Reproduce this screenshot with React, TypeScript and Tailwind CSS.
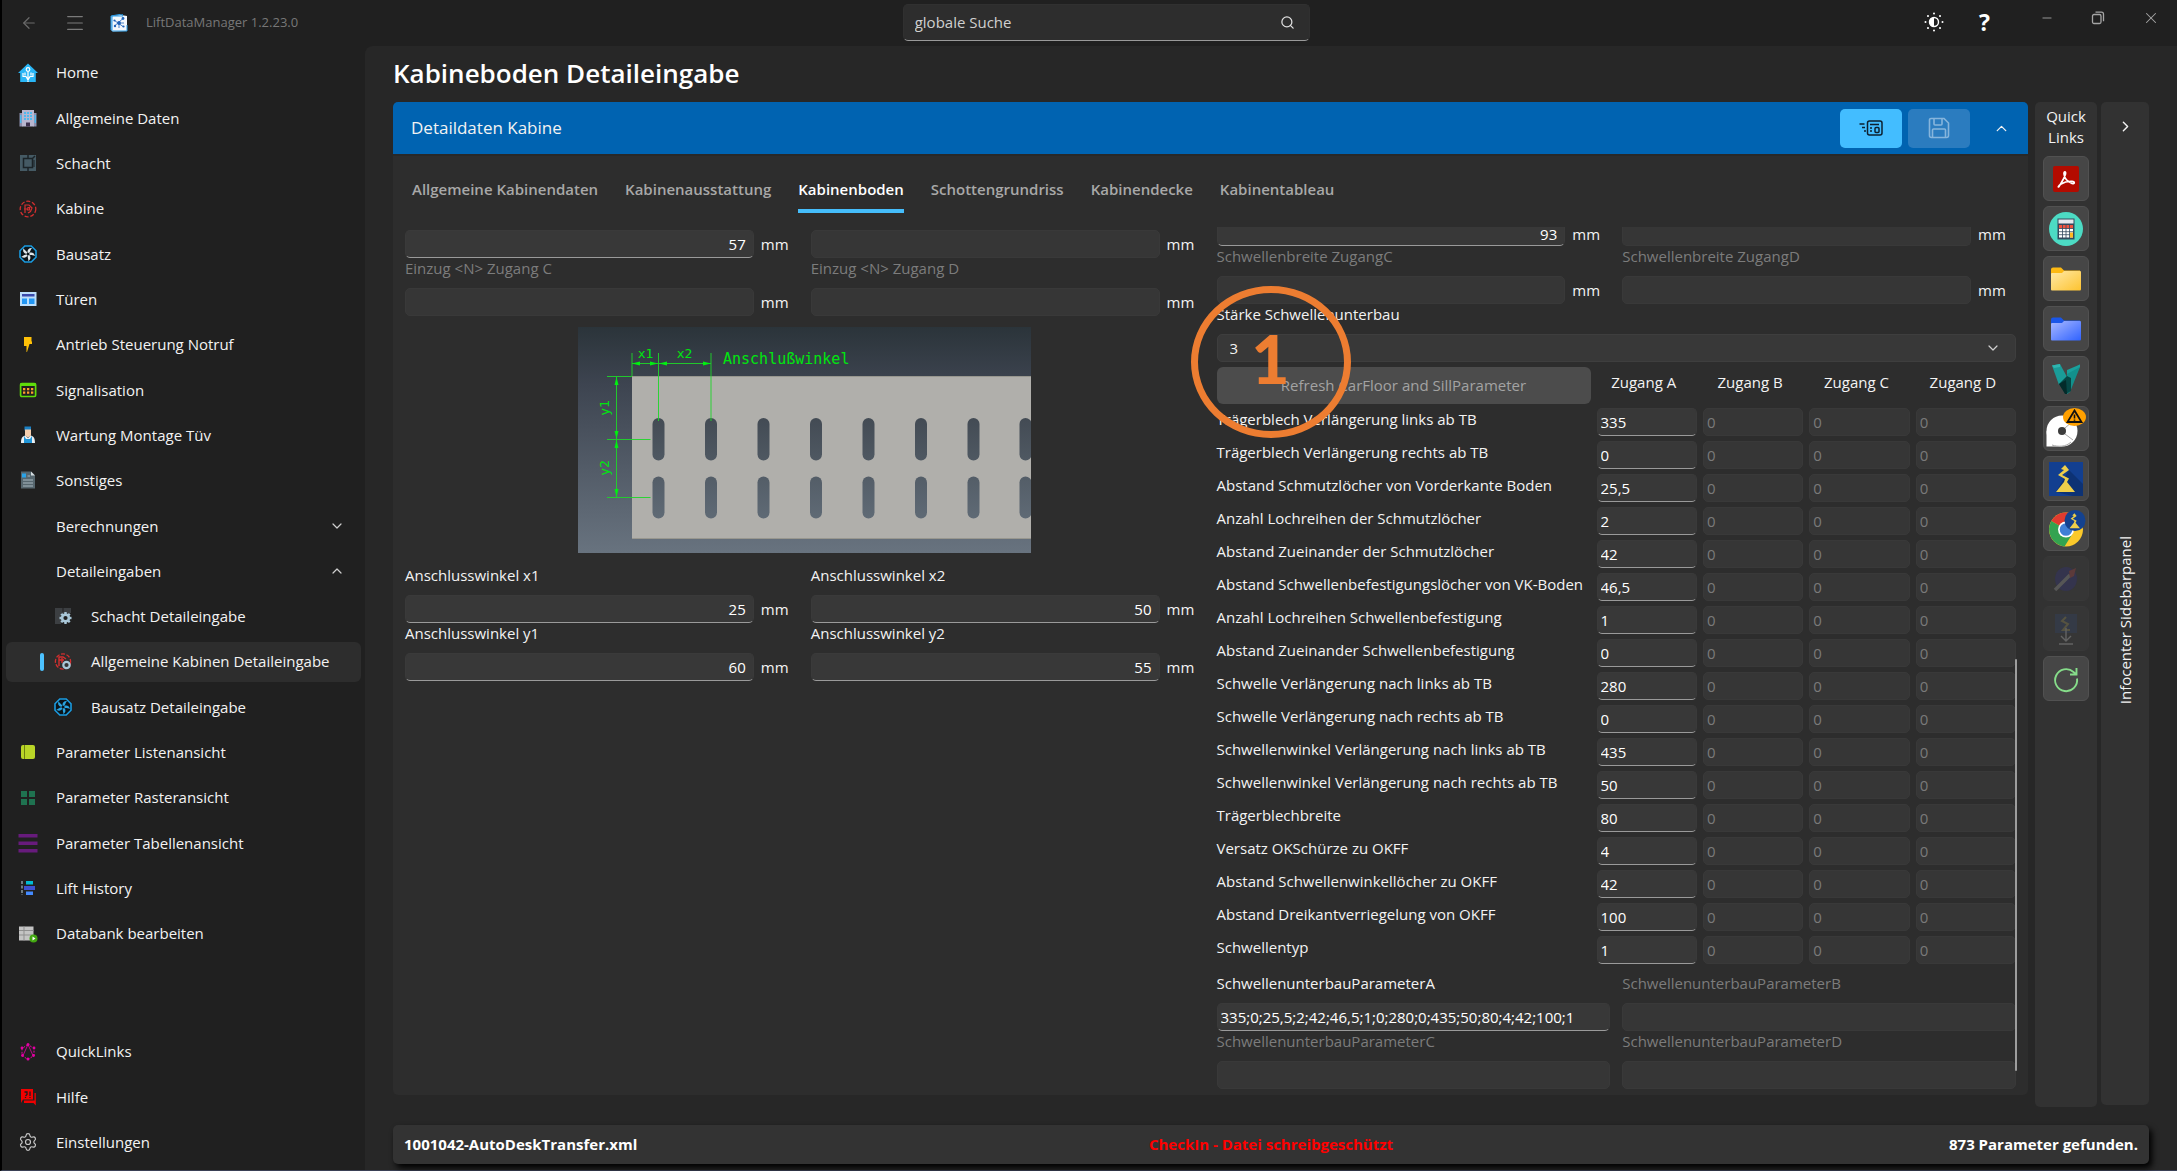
import React from "react";
import { ArrowLeft, Menu, Search, ChevronDown, ChevronUp, ChevronRight, Minus, X, Settings } from "lucide-react";

function Icon({ children }: { children: React.ReactNode }) {
  return (
    <svg viewBox="0 0 20 20" className="size-5 shrink-0" fill="none" aria-hidden="true">
      {children}
    </svg>
  );
}

const gearTeeth = [0, 45, 90, 135, 180, 225, 270, 315];

function SmallGear({ cx, cy }: { cx: number; cy: number }) {
  return (
    <g>
      {gearTeeth.map((a) => (
        <rect key={a} x={cx - 1.2} y={cy - 6} width="2.4" height="3" fill="#a9c7d8" transform={`rotate(${a} ${cx} ${cy})`} />
      ))}
      <circle cx={cx} cy={cy} r="3.4" stroke="#a9c7d8" strokeWidth="2.6" />
    </g>
  );
}

function Turbine({ blade }: { blade: string }) {
  return (
    <g>
      <path d="M6.8 2h6.4L18 6.8v6.4L13.2 18H6.8L2 13.2V6.8z" fill="#0b1419" stroke="#1a9be0" strokeWidth="1.6" />
      {[0, 72, 144, 216, 288].map((a) => (
        <path key={a} d="M9.5 8.400c-.3-2.600 1.500-4.600 4.500-4.400-1.200 1-1.300 3-2.800 4.900z" fill={blade} transform={`rotate(${a} 10 10)`} />
      ))}
    </g>
  );
}

const ico = {
  home: (
    <Icon>
      <path d="M10 .5 20 10h-2.200v9H2.200v-9H0z" fill="#29b6f6" />
      <circle cx="10" cy="6.500" r="1.800" stroke="#fff" strokeWidth="1.200" />
      <path d="M10 8.500V19M5 10v3.500h3L10 17l2-3.500h3V10M7 9.500v3M13 9.500v3" stroke="#fff" strokeWidth="1.200" />
    </Icon>
  ),
  building: (
    <Icon>
      <path d="M1.500 5h3v13.500h-3zM15.500 5h3v13.500h-3z" fill="#8d8fae" />
      <path d="M4 2h12v16.500H4z" fill="#b8b6cf" />
      <path d="M6 4h2v2H6zM9 4h2v2H9zM12 4h2v2h-2zM6 7h2v2H6zM9 7h2v2H9zM12 7h2v2h-2zM6 10h2v2H6zM9 10h2v2H9zM12 10h2v2h-2zM2 7h1.500v8H2zM16.500 7H18v8h-1.500z" fill="#4fb9ee" />
      <path d="M8 14.500h4v4H8z" fill="#3c2f4c" />
    </Icon>
  ),
  shaft: (
    <Icon>
      <path d="M2 2h16v16H2z" fill="#455a64" />
      <path d="M5.500 5.500h9v9h-9zM10 2v3.500M10 14.500V18M14 6l3-3" stroke="#1b2327" strokeWidth="1.500" />
      <path d="M16 7v7" stroke="#1b2327" strokeWidth="1" />
    </Icon>
  ),
  cabin: (
    <Icon>
      <circle cx="10" cy="10" r="7.800" stroke="#d32f2f" strokeWidth="1.300" strokeDasharray="4 1.800" />
      <path d="M7 14V6h4l3 3-1.500 3.500L10 14M6 10h3M10 8.500h1.500V11H9.500z" stroke="#d32f2f" strokeWidth="1.200" />
    </Icon>
  ),
  kit: (
    <Icon>
      <Turbine blade="#dfe6ea" />
    </Icon>
  ),
  doors: (
    <Icon>
      <path d="M2 3h16.500v14H2z" fill="#bbdefb" />
      <path d="M4 5h12.500v2.500H4z" fill="#3949ab" />
      <path d="M4 9.500h5V15H4zM11 9.500h5.500V15H11z" fill="#2196f3" />
    </Icon>
  ),
  bolt: (
    <Icon>
      <path d="M6 2h7.500v4.500H14V9h-2.500L9 17h-.5v-6H6z" fill="#ffc107" />
    </Icon>
  ),
  signal: (
    <Icon>
      <rect x="2.600" y="3.500" width="15" height="13" rx="1.200" stroke="#5fdc0a" strokeWidth="1.700" />
      <path d="M2.500 3h15v3h-15z" fill="#5fdc0a" />
      <path d="M5 8h2.300v2.300H5zM9 8h2.300v2.300H9zM13 8h2.300v2.300H13zM5 11.500h2.300v2.300H5zM9 11.500h2.300v2.300H9zM13 11.500h2.300v2.300H13z" fill="#ff9d2e" />
    </Icon>
  ),
  worker: (
    <Icon>
      <path d="M6.500 1.500h6.500v4H6.500z" fill="#1a80c4" />
      <path d="M7 4.500h6v6l-3 2-3-2z" fill="#f6cfae" />
      <path d="M3 18c0-5 1.500-7 4.500-7.500L10 13l2.500-2.500C15.500 11 17 13 17 18z" fill="#e9eef2" />
      <path d="M6 11v7h8v-7l-2 3H8z" fill="#2196d8" />
    </Icon>
  ),
  doc: (
    <Icon>
      <path d="M3 1.500h10l4 4v13H3z" fill="#56666e" />
      <path d="M13 1.500v4h4z" fill="#d5dde0" />
      <path d="M4 3.500h4v4H4z" fill="#29a3e8" />
      <path d="M9.500 6H12M5 10h10M5 13h10M5 16h10" stroke="#a8b8c0" strokeWidth="1.100" />
    </Icon>
  ),
  shaftGear: (
    <Icon>
      <path d="M2 2h16v5H8v11H2z" fill="#3c3f42" />
      <path d="M10 2v4" stroke="#202020" />
      <SmallGear cx={12.5} cy={12} />
    </Icon>
  ),
  cabinGear: (
    <Icon>
      <circle cx="10" cy="9.500" r="7.600" stroke="#d32f2f" strokeWidth="1.300" strokeDasharray="4 1.600" />
      <path d="M6 14V5h4l3 2M6 8h5M9 6v5" stroke="#d32f2f" strokeWidth="1.400" />
      <circle cx="13.500" cy="13" r="3.200" fill="#333" stroke="#a9c7d8" strokeWidth="2.200" />
    </Icon>
  ),
  kitGear: (
    <Icon>
      <Turbine blade="#29a3e0" />
    </Icon>
  ),
  list: (
    <Icon>
      <rect x="3" y="3" width="14" height="14" rx="2" fill="#b9d527" />
      <path d="M6.500 3v14" stroke="#6d8010" strokeWidth="1" />
    </Icon>
  ),
  raster: (
    <Icon>
      <path d="M3 3h6v6H3zM11 3h6v6h-6zM3 11h6v6H3zM11 11h6v6h-6z" fill="#1f7250" />
    </Icon>
  ),
  table: (
    <Icon>
      <path d="M.5 1h19v3.500H.5zM.5 8.500h19V12H.5zM.5 16h19v3.500H.5z" fill="#671b7c" />
    </Icon>
  ),
  history: (
    <Icon>
      <path d="M4 3v14" stroke="#8fa3ad" strokeWidth="1.400" strokeDasharray="3 1.500" />
      <path d="M8 3h7v3.500H8z" fill="#00bcd4" />
      <path d="M6 8h11v4H6z" fill="#3f51d0" />
      <path d="M8 13.500h7V17H8z" fill="#448aff" />
    </Icon>
  ),
  database: (
    <Icon>
      <path d="M1 2.500h14.500v14H1z" fill="#c4c4c4" />
      <path d="M1 6.500h14.500M1 11h14.500M6 2.500v14" stroke="#8f8f8f" />
      <circle cx="15.500" cy="14.500" r="4" fill="#43a811" />
      <path d="M14.500 12.500v4l3-2z" fill="#fff" />
    </Icon>
  ),
  links: (
    <Icon>
      <path d="M10 2.500 4 6.500v7l6 4 6-4v-7z" stroke="#e500a4" strokeWidth="1" strokeDasharray="2 1.500" />
      <path d="M10 2.500 5 13.500M10 2.500l5 11" stroke="#e500a4" strokeWidth=".8" />
      <g fill="#e500a4">
        <circle cx="10" cy="2.500" r="1.500" />
        <circle cx="4" cy="6" r="1.400" />
        <circle cx="16" cy="6" r="1.400" />
        <circle cx="4.500" cy="13.500" r="1.400" />
        <circle cx="15.500" cy="13.500" r="1.400" />
        <circle cx="10" cy="17" r="1.500" />
      </g>
    </Icon>
  ),
  help: (
    <Icon>
      <path d="M3 2h12v10.500H5L3 16z" fill="#f00000" />
      <path d="M17.800 6v12.500L15.500 16H6v-2.500h10.500V6z" fill="#f00000" />
      <path d="M6.500 5h2.500v2.500L7.500 9M7.500 10v1M12 4.500V9M12 10v1" stroke="#1c1c1c" strokeWidth="1.300" />
    </Icon>
  ),
  settings: <Settings className="size-5 shrink-0 text-[#c8c8c8]" strokeWidth={1.4} aria-hidden="true" />,
};

type NavEntry = { label: string; icon?: React.ReactNode; sub?: boolean; active?: boolean; chevron?: "up" | "down" };

const mainNav: NavEntry[] = [
  { label: "Home", icon: ico.home },
  { label: "Allgemeine Daten", icon: ico.building },
  { label: "Schacht", icon: ico.shaft },
  { label: "Kabine", icon: ico.cabin },
  { label: "Bausatz", icon: ico.kit },
  { label: "Türen", icon: ico.doors },
  { label: "Antrieb Steuerung Notruf", icon: ico.bolt },
  { label: "Signalisation", icon: ico.signal },
  { label: "Wartung Montage Tüv", icon: ico.worker },
  { label: "Sonstiges", icon: ico.doc },
  { label: "Berechnungen", chevron: "down" },
  { label: "Detaileingaben", chevron: "up" },
  { label: "Schacht Detaileingabe", icon: ico.shaftGear, sub: true },
  { label: "Allgemeine Kabinen Detaileingabe", icon: ico.cabinGear, sub: true, active: true },
  { label: "Bausatz Detaileingabe", icon: ico.kitGear, sub: true },
  { label: "Parameter Listenansicht", icon: ico.list },
  { label: "Parameter Rasteransicht", icon: ico.raster },
  { label: "Parameter Tabellenansicht", icon: ico.table },
  { label: "Lift History", icon: ico.history },
  { label: "Databank bearbeiten", icon: ico.database },
];

const footerNav: NavEntry[] = [
  { label: "QuickLinks", icon: ico.links },
  { label: "Hilfe", icon: ico.help },
  { label: "Einstellungen", icon: ico.settings },
];

function NavItem({ item }: { item: NavEntry }) {
  return (
    <li className="flex min-h-0 flex-1 items-center">
      <a
        href="#"
        aria-current={item.active ? "page" : undefined}
        className={`flex h-10 w-full items-center rounded-md pr-4 ${item.active ? "bg-[#2d2d2d]" : ""} ${item.sub ? "pl-[34px]" : "pl-3"}`}
      >
        {item.sub && <span className={`h-[18px] w-1 rounded-full ${item.active ? "bg-[#4cc2ff]" : ""}`} />}
        <span className={`flex w-5 shrink-0 ${item.sub ? "ml-[9px]" : ""}`}>{item.icon}</span>
        <span className="ml-[18px] flex-1 whitespace-nowrap">{item.label}</span>
        {item.chevron === "down" && <ChevronDown className="size-4 text-[#cfcfcf]" strokeWidth={1.8} />}
        {item.chevron === "up" && <ChevronUp className="size-4 text-[#cfcfcf]" strokeWidth={1.8} />}
      </a>
    </li>
  );
}

type FieldProps = { id: string; value?: string; disabled?: boolean; right?: boolean; label?: string; flush?: boolean };

function Field({ id, value = "", disabled, right, label, flush }: FieldProps) {
  return (
    <input
      id={id}
      aria-label={label}
      defaultValue={value}
      disabled={disabled}
      className={`w-full min-w-0 border px-[7px] ${flush ? "h-[19px] rounded-b-[5px] border-t-0 pb-1 leading-none" : "h-7 rounded-[5px]"} ${
        right ? "text-right" : "pl-[3px]"
      } ${
        disabled
          ? "border-[#393939] bg-[#363636] text-[#7a7a7a]"
          : "border-[#3a3a3a] border-b-[#9a9a9a] bg-[#383838] text-white"
      }`}
    />
  );
}

function MmField(props: FieldProps) {
  return (
    <div className="flex items-center gap-[7px]">
      <Field {...props} right />
      <span className={`w-[38px] shrink-0 ${props.flush ? "pb-1 leading-[15px]" : ""}`}>mm</span>
    </div>
  );
}

function FieldLabel({ id, dim, children }: { id: string; dim?: boolean; children: React.ReactNode }) {
  return (
    <label htmlFor={id} className={`block h-[30px] leading-[21px] ${dim ? "text-[#7c7c7c]" : ""}`}>
      {children}
    </label>
  );
}

const slotX = [80.5, 133, 185.5, 238, 290.5, 343, 395.5, 447.5];

function BracketDrawing() {
  return (
    <svg viewBox="0 0 453 226" className="mx-auto mt-[11px] h-[226px] w-[453px]" role="img" aria-label="Anschlußwinkel">
      <defs>
        <linearGradient id="sky" x1="0" y1="0" x2="0" y2="1">
          <stop offset="0" stopColor="#2b343a" />
          <stop offset=".25" stopColor="#3d4450" />
          <stop offset="1" stopColor="#68737f" />
        </linearGradient>
        <linearGradient id="slot" gradientUnits="userSpaceOnUse" x1="0" y1="91" x2="0" y2="191">
          <stop offset="0" stopColor="#434b54" />
          <stop offset="1" stopColor="#5f6a75" />
        </linearGradient>
      </defs>
      <rect width="453" height="226" fill="url(#sky)" />
      <rect x="54" y="49" width="399" height="163" fill="#b0afab" />
      <path d="M54 211.500h399M54 49.500h399" stroke="#98978f" />
      {slotX.map((x) => (
        <g key={x} fill="url(#slot)">
          <rect x={x - 6} y="91" width="12" height="42.500" rx="6" />
          <rect x={x - 6} y="149.500" width="12" height="42" rx="6" />
        </g>
      ))}
      <path
        d="M54 26v23M80.500 26v68M133 26v68M54 36.500h79M38.500 49.500v121M29 49.500h25M29 112.500h43.500M29 170.500h43.500"
        stroke="#1fd62a"
        strokeWidth="1"
        opacity=".9"
      />
      <g fill="#00f010">
        <path d="M54 36.500l8-2v4zM80 36.500l-8-2v4zM81 36.500l8-2v4zM133 36.500l-8-2v4z" />
        <path d="M38.500 50l-2 8h4zM38.500 112l-2-8h4zM38.500 113l-2 8h4zM38.500 170l-2-8h4z" />
      </g>
      <g fill="#00e60f" fontFamily="'DejaVu Sans Mono', monospace" fontSize="13">
        <text x="67.500" y="31" textAnchor="middle">x1</text>
        <text x="106.500" y="31" textAnchor="middle">x2</text>
        <text x="145" y="37" fontSize="15">Anschlußwinkel</text>
        <text transform="translate(31 81) rotate(-90)" textAnchor="middle">y1</text>
        <text transform="translate(31 141) rotate(-90)" textAnchor="middle">y2</text>
      </g>
    </svg>
  );
}

const sillRows: [string, string][] = [
  ["Trägerblech Verlängerung links ab TB", "335"],
  ["Trägerblech Verlängerung rechts ab TB", "0"],
  ["Abstand Schmutzlöcher von Vorderkante Boden", "25,5"],
  ["Anzahl Lochreihen der Schmutzlöcher", "2"],
  ["Abstand Zueinander der Schmutzlöcher", "42"],
  ["Abstand Schwellenbefestigungslöcher von VK-Boden", "46,5"],
  ["Anzahl Lochreihen Schwellenbefestigung", "1"],
  ["Abstand Zueinander Schwellenbefestigung", "0"],
  ["Schwelle Verlängerung nach links ab TB", "280"],
  ["Schwelle Verlängerung nach rechts ab TB", "0"],
  ["Schwellenwinkel Verlängerung nach links ab TB", "435"],
  ["Schwellenwinkel Verlängerung nach rechts ab TB", "50"],
  ["Trägerblechbreite", "80"],
  ["Versatz OKSchürze zu OKFF", "4"],
  ["Abstand Schwellenwinkellöcher zu OKFF", "42"],
  ["Abstand Dreikantverriegelung von OKFF", "100"],
  ["Schwellentyp", "1"],
];

const entrances = ["A", "B", "C", "D"];

function SillTable() {
  return (
    <table className="mt-[5px] w-full table-fixed border-collapse">
      <thead>
        <tr>
          <th className="w-[374px] p-0 pb-1">
            <button disabled className="block h-[37px] w-full rounded-md bg-[#4c4c4c] font-normal text-[#a3a3a3]">
              Refresh CarFloor and SillParameter
            </button>
          </th>
          {entrances.map((e) => (
            <th key={e} scope="col" className="p-0 pb-2.5 text-center font-normal">
              Zugang {e}
            </th>
          ))}
        </tr>
      </thead>
      <tbody>
        {sillRows.map(([name, value]) => (
          <tr key={name}>
            <th scope="row" className="p-0 text-left align-top leading-[23px] font-normal whitespace-nowrap">
              {name}
            </th>
            {entrances.map((e) => (
              <td key={e} className="p-0 pb-[5px] pl-1.5">
                <div className="flex">
                  <Field id={`${name}-${e}`} label={`${name}, Zugang ${e}`} value={e === "A" ? value : "0"} disabled={e !== "A"} />
                </div>
              </td>
            ))}
          </tr>
        ))}
      </tbody>
    </table>
  );
}

const boltPath = "M19 6l4 5-7 5 7 3.500-2 3.500 8 10H10l8-10 1-3-7-4 6-5-3-1z";

function QuickIcon({ children }: { children: React.ReactNode }) {
  return (
    <svg viewBox="0 0 40 40" className="size-10 overflow-visible" fill="none" aria-hidden="true">
      {children}
    </svg>
  );
}

function Folder({ id, tab, from, to }: { id: string; tab: string; from: string; to: string }) {
  return (
    <QuickIcon>
      <defs>
        <linearGradient id={id} x1="0" y1="0" x2="1" y2="1">
          <stop offset="0" stopColor={from} />
          <stop offset="1" stopColor={to} />
        </linearGradient>
      </defs>
      <path d="M5 10.500q0-2 2-2h8l3 3h16v6H5z" fill={tab} />
      <path d="M6 14h10l2-2h16q1 0 1 1v17q0 1.500-1 1.500H6q-1 0-1-1V15q0-1 1-1z" fill={`url(#${id})`} />
    </QuickIcon>
  );
}

const quickLinks: { label: string; icon: React.ReactNode; disabled?: boolean }[] = [
  {
    label: "PDF",
    icon: (
      <QuickIcon>
        <rect x="7" y="7" width="26" height="26" rx="2" fill="#b30b00" />
        <path
          d="M13 27.500c2-3.500 5-7 6.500-12.500.6-3-1.800-3-1.500 0 .5 4.500 4 8 8 9.500 3 .5 3-2 0-2.200-4-.2-8 .8-11 2.700-3 2-3.200 4-2 2.500z"
          stroke="#fff"
          strokeWidth="1.700"
        />
      </QuickIcon>
    ),
  },
  {
    label: "Rechner",
    icon: (
      <QuickIcon>
        <circle cx="20" cy="20" r="17" fill="#4cdbc4" />
        <path d="M11.500 9.500h17v21h-17z" fill="#324a5e" />
        <path d="M12.500 10.500h15v4h-15z" fill="#e6e9ee" />
        <path d="M13 16.500h14v12H13z" fill="#fff" />
        <path d="M13 16h14v3.500H13z" fill="#f1543f" />
        <path d="M24 23.500h3v5h-3z" fill="#ffb820" />
        <path d="M16.500 16v13M20 16v13M23.500 16v13M13 19.500h14M13 22.700h14M13 25.700h11" stroke="#324a5e" strokeWidth=".8" />
      </QuickIcon>
    ),
  },
  { label: "Ordner", icon: <Folder id="fy" tab="#fdb913" from="#ffe9a8" to="#fdc32f" /> },
  { label: "Projektordner", icon: <Folder id="fb" tab="#1a56e8" from="#a8b8ff" to="#2f62ff" /> },
  {
    label: "Vault",
    icon: (
      <QuickIcon>
        <path d="M6 6.500 14 5l7 13-8 8z" fill="#1a9c98" />
        <path d="M6 6.500 14 5v3L8 9z" fill="#2fb5b0" />
        <path d="M34 5.500 21 13v22l3-2L34 8z" fill="#12908c" />
        <path d="M34 5.500 21 11v4l13-7z" fill="#1aa09c" />
        <path d="M13 25l8-8 4 2v13l-5 3z" fill="#064745" />
        <path d="M13 25l7-4 1 14h-2z" fill="#032b2a" />
      </QuickIcon>
    ),
  },
  {
    label: "CFP",
    icon: (
      <QuickIcon>
        <circle cx="16" cy="22" r="15.500" fill="#fff" />
        <path d="M.5 22v15.500H16z" fill="#fff" />
        <circle cx="16" cy="22" r="4" fill="#3c3c3c" />
        <path d="M19 19 27 12M19 25l8 6M6 36c6 2 14 2 19-3" stroke="#a8a8a8" />
        <ellipse cx="28.500" cy="8" rx="11.500" ry="9" fill="#ffa000" />
        <path d="M28.500 1.500 35.500 13h-14z" stroke="#111" strokeWidth="1.800" />
        <path d="M28.500 5.500v4M28.500 10.500v1.300" stroke="#111" strokeWidth="1.600" />
      </QuickIcon>
    ),
  },
  {
    label: "Lift",
    icon: (
      <QuickIcon>
        <path d="M3 3h34v34H3z" fill="#123f90" />
        <path d="M23 11 37 25v12H27L10 33z" fill="#0d3274" />
        <path d={boltPath} fill="#efcf4a" />
      </QuickIcon>
    ),
  },
  {
    label: "Chrome",
    icon: (
      <QuickIcon>
        <circle cx="20" cy="20.500" r="17" fill="#fbc92b" />
        <path d="M20 20.500 5.300 12A17 17 0 0 1 34.700 12z" fill="#e03b2f" />
        <path d="M20 20.500 5.300 12a17 17 0 0 0 13.200 25.400L27 24z" fill="#33a350" />
        <circle cx="20" cy="20.500" r="8" fill="#fff" />
        <circle cx="20" cy="20.500" r="6.300" fill="#3f7fd6" />
        <circle cx="29" cy="11.500" r="10.500" fill="#14428f" />
        <path d={boltPath} fill="#efcf4a" transform="translate(18 1) scale(.55)" />
      </QuickIcon>
    ),
  },
  {
    label: "Rakete",
    disabled: true,
    icon: (
      <QuickIcon>
        <ellipse cx="20" cy="20" rx="11" ry="12" fill="#34344d" />
        <path d="M9 31 24 16" stroke="#565656" strokeWidth="3.500" />
        <path d="M23 12l7-3-2 8-4 2z" fill="#5c3a3a" />
      </QuickIcon>
    ),
  },
  {
    label: "Import",
    disabled: true,
    icon: (
      <QuickIcon>
        <path d="M9 5h22v19H9z" fill="#343a46" />
        <path d="M20 8l-4 4 6 3-5 6h7" stroke="#565340" strokeWidth="2" />
        <path d="M20 19v13M15 27l5 5 5-5M13 35h14" stroke="#636363" strokeWidth="1.400" />
      </QuickIcon>
    ),
  },
  {
    label: "Aktualisieren",
    icon: (
      <QuickIcon>
        <path d="M31 19.500a11 11 0 1 1-3.500-6.500l3 2.500M30.500 9v6.500H24" stroke="#86dd8a" strokeWidth="1.900" />
      </QuickIcon>
    ),
  },
];

const tabs = ["Allgemeine Kabinendaten", "Kabinenausstattung", "Kabinenboden", "Schottengrundriss", "Kabinendecke", "Kabinentableau"];

function TitleBar() {
  return (
    <header className="flex h-[46px] items-start">
      <div className="flex h-[45px] flex-[27] items-center">
        <button aria-label="Zurück" className="ml-[18px] text-[#6a6a6a]">
          <ArrowLeft className="size-[18px]" strokeWidth={1.6} />
        </button>
        <button aria-label="Menü" className="ml-[26px] text-[#7a7a7a]">
          <Menu className="size-[22px]" strokeWidth={1.3} />
        </button>
        <svg viewBox="0 0 18 18" className="ml-6 size-[18px]" fill="none" aria-hidden="true">
          <path d="M1 2 11 1l6 1v15L3 17.500 1 16z" fill="#f4f8fc" />
          <path d="M1 2 12 0l1 2H2v14H1zM2 17h15v-6" stroke="#2b9be6" strokeWidth="1" />
          <path d="M4.500 6.500 13 12.500M13 4.500l-8 7M9 9v5M9 9l5 0" stroke="#1f62b8" strokeWidth=".8" />
          <circle cx="9" cy="9" r="1.900" fill="#1f62b8" />
          <circle cx="4.500" cy="6.500" r="1.100" fill="#1f62b8" />
          <circle cx="13" cy="4.500" r="1.400" fill="#1f62b8" />
          <circle cx="13.500" cy="12.500" r="1.100" fill="#1f62b8" />
          <circle cx="5" cy="12" r="1.200" fill="#1f62b8" />
        </svg>
        <span className="ml-[18px] text-[13px] text-[#777]">LiftDataManager 1.2.23.0</span>
      </div>
      <div className="mt-1 flex h-[37px] w-[407px] items-center rounded-[5px] border border-[#303030] border-b-[#9a9a9a] bg-[#2d2d2d] pr-3.5 pl-[11px]">
        <input aria-label="globale Suche" placeholder="globale Suche" className="min-w-0 flex-1 bg-transparent outline-none placeholder:text-[#d0d0d0]" />
        <button aria-label="Suchen">
          <Search className="size-[15px] text-[#e0e0e0]" strokeWidth={2} />
        </button>
      </div>
      <div className="flex h-11 flex-[26] items-center justify-end">
        <button aria-label="Design wechseln" className="mr-[35px]">
          <svg viewBox="0 0 20 20" className="size-5" fill="none">
            <circle cx="10" cy="10" r="4.500" stroke="#fff" strokeWidth="1.400" />
            <path d="M10 5.500a4.500 4.500 0 0 0 0 9z" fill="#fff" />
            {gearTeeth.map((a) => (
              <circle key={a} cx="10" cy="1.500" r="1" fill="#fff" transform={`rotate(${a} 10 10)`} />
            ))}
          </svg>
        </button>
        <button aria-label="Hilfe" className="mr-[50px] text-[23px] leading-none font-bold text-white">
          ?
        </button>
        <div className="flex items-center gap-[37px] pr-[17px] pb-2 text-[#a5a5a5]">
          <button aria-label="Minimieren">
            <Minus className="size-3.5" strokeWidth={1.5} />
          </button>
          <button aria-label="Wiederherstellen">
            <svg viewBox="0 0 14 14" className="size-3.5" fill="none" stroke="currentColor" strokeWidth="1.300">
              <rect x="1.500" y="3.500" width="8.500" height="9" rx="1.500" />
              <path d="M4.500 1.200h6q2 0 2 2v7" />
            </svg>
          </button>
          <button aria-label="Schließen">
            <X className="size-[18px]" strokeWidth={1.4} />
          </button>
        </div>
      </div>
    </header>
  );
}

function PanelHeader() {
  return (
    <div className="flex h-[52px] items-center rounded-t-[5px] bg-[#0063b1] pr-[18px] pl-[18px]">
      <h2 className="flex-1 text-[17px]">Detaildaten Kabine</h2>
      <button aria-label="Daten senden" className="flex h-[39px] w-[62px] items-center justify-center rounded-[5px] bg-[#43bdff]">
        <svg viewBox="0 0 24 16" className="h-4 w-6" fill="none" stroke="#0d2030" strokeWidth="1.500">
          <rect x="8.500" y="1" width="14.500" height="14" rx="2" />
          <path d="M11 4.500h9M11 8h2M11 11h2M.5 4h5M3 7.500h3M5 11h2" />
          <rect x="16" y="7.500" width="4" height="5" rx="1" />
        </svg>
      </button>
      <button aria-label="Speichern" disabled className="ml-1.5 flex h-[39px] w-[62px] items-center justify-center rounded-[5px] bg-[#2b7cbf]">
        <svg viewBox="0 0 22 22" className="size-[22px]" fill="none" stroke="#86b5dc" strokeWidth="1.600">
          <path d="M3 1.500h13l4.500 4.500v12.500a2 2 0 0 1-2 2h-15a2 2 0 0 1-2-2V3a1.500 1.500 0 0 1 1.500-1.500z" />
          <path d="M6 1.500V7a1 1 0 0 0 1 1h6a1 1 0 0 0 1-1V1.500M4.500 20.500V13a1 1 0 0 1 1-1h11a1 1 0 0 1 1 1v7.500" />
        </svg>
      </button>
      <button aria-label="Einklappen" className="ml-[23px]">
        <ChevronUp className="size-[17px]" strokeWidth={1.8} />
      </button>
    </div>
  );
}

function LeftColumn() {
  return (
    <div className="pt-[3px]">
      <div className="grid grid-cols-2 gap-x-3">
        <div>
          <MmField id="einzug-a" label="Einzug Zugang A" value="57" />
          <FieldLabel id="einzug-c" dim>Einzug &lt;N&gt; Zugang C</FieldLabel>
          <MmField id="einzug-c" disabled />
        </div>
        <div>
          <MmField id="einzug-b" label="Einzug Zugang B" disabled />
          <FieldLabel id="einzug-d" dim>Einzug &lt;N&gt; Zugang D</FieldLabel>
          <MmField id="einzug-d" disabled />
        </div>
      </div>
      <BracketDrawing />
      <div className="mt-3 grid grid-cols-2 gap-x-3">
        {[
          ["x1", "25"],
          ["x2", "50"],
          ["y1", "60"],
          ["y2", "55"],
        ].map(([axis, value]) => (
          <div key={axis}>
            <FieldLabel id={`winkel-${axis}`}>Anschlusswinkel {axis}</FieldLabel>
            <MmField id={`winkel-${axis}`} value={value} />
          </div>
        ))}
      </div>
    </div>
  );
}

function RightColumn() {
  return (
    <div className="relative">
      <div className="grid grid-cols-2 gap-x-3">
        <MmField id="breite-a" label="Schwellenbreite ZugangA" value="93" flush />
        <MmField id="breite-b" label="Schwellenbreite ZugangB" disabled flush />
      </div>
      <div className="grid grid-cols-2 gap-x-3">
        {["C", "D"].map((e) => (
          <div key={e}>
            <FieldLabel id={`breite-${e}`} dim>Schwellenbreite Zugang{e}</FieldLabel>
            <MmField id={`breite-${e}`} disabled />
          </div>
        ))}
      </div>
      <FieldLabel id="staerke">Stärke Schwellenunterbau</FieldLabel>
      <div className="relative">
        <select id="staerke" defaultValue="3" className="block h-7 w-full appearance-none rounded-[5px] border border-[#3e3e3e] bg-[#383838] pl-3">
          <option>3</option>
        </select>
        <ChevronDown className="pointer-events-none absolute top-1.5 right-[15px] size-4 text-[#cfcfcf]" strokeWidth={1.8} />
      </div>
      <SillTable />
      <div className="mt-1 grid grid-cols-2 gap-x-3">
        {entrances.map((e) => (
          <div key={e}>
            <FieldLabel id={`unterbau-${e}`} dim={e !== "A"}>SchwellenunterbauParameter{e}</FieldLabel>
            <Field id={`unterbau-${e}`} value={e === "A" ? "335;0;25,5;2;42;46,5;1;0;280;0;435;50;80;4;42;100;1" : ""} disabled={e !== "A"} />
          </div>
        ))}
      </div>
      <div className="absolute top-[432px] -right-px h-[412px] w-0.5 rounded-full bg-[#9d9d9d]" />
      <div className="pointer-events-none absolute top-[59px] -left-[26px] flex h-[152px] w-[160px] items-center justify-center rounded-[50%] border-[7px] border-[#ed7d31] pb-1.5 font-[Lato,sans-serif] text-[66px] leading-none font-black text-[#ed7d31]">
        1
      </div>
    </div>
  );
}

export default function App() {
  return (
    <div className="flex min-h-screen flex-col border-b border-l-2 border-b-[#3a4055] border-l-black bg-[#202020] font-['Open_Sans','Noto_Sans',sans-serif] text-[15px] text-[#f3f3f3]">
      <TitleBar />
      <div className="flex flex-1">
        <nav className="flex w-[363px] shrink-0 flex-col px-1 pt-1 pb-[5px]">
          <ul className="flex flex-[20] flex-col">
            {mainNav.map((item) => (
              <NavItem key={item.label} item={item} />
            ))}
          </ul>
          <div className="h-[73px]" />
          <ul className="flex flex-[3] flex-col">
            {footerNav.map((item) => (
              <NavItem key={item.label} item={item} />
            ))}
          </ul>
        </nav>
        <main className="flex min-w-0 flex-1 flex-col rounded-tl-lg bg-[#272727] px-7">
          <h1 className="flex h-14 items-center pb-0.5 text-[26px] font-semibold text-white">Kabineboden Detaileingabe</h1>
          <div className="flex flex-1">
            <section className="mb-3 flex min-w-0 flex-1 flex-col rounded-[5px] bg-[#2d2d2d]">
              <PanelHeader />
              <div className="flex gap-[27px] border-t-2 border-[#282828] px-[19px] pt-[22px] pb-3.5" role="tablist">
                {tabs.map((t) => {
                  const on = t === "Kabinenboden";
                  return (
                    <button
                      key={t}
                      role="tab"
                      aria-selected={on}
                      className={`h-[35px] border-b-4 pb-2 font-semibold whitespace-nowrap ${on ? "border-[#45bdfb] text-white" : "border-transparent text-[#a8a8a8]"}`}
                    >
                      {t}
                    </button>
                  );
                })}
              </div>
              <div className="grid grid-cols-2 gap-3 px-3 pb-1">
                <LeftColumn />
                <RightColumn />
              </div>
            </section>
            <aside className="ml-[7px] flex w-[62px] flex-col items-center rounded-[5px] bg-[#323232] pt-1">
              <h3 className="mb-2 text-center leading-[21px]">
                Quick
                <br />
                Links
              </h3>
              <div className="flex flex-col gap-[5px]">
                {quickLinks.map((q) => (
                  <button
                    key={q.label}
                    aria-label={q.label}
                    disabled={q.disabled}
                    className={`flex h-[45px] w-[46px] items-center justify-center rounded-md border ${q.disabled ? "border-[#383838] bg-[#363636]" : "border-[#515151] bg-[#464646]"}`}
                  >
                    {q.icon}
                  </button>
                ))}
              </div>
            </aside>
            <aside className="mb-0.5 ml-1 flex w-12 flex-col items-center rounded-[5px] bg-[#323232] pt-4">
              <button aria-label="Infocenter öffnen">
                <ChevronRight className="size-[17px]" strokeWidth={2} />
              </button>
              <div className="flex flex-1 items-center">
                <span className="rotate-180 [writing-mode:vertical-rl]">Infocenter Sidebarpanel</span>
              </div>
            </aside>
          </div>
          <footer className="mt-[18px] mb-1.5 grid h-[39px] grid-cols-3 items-center rounded-[5px] bg-[#333] px-[11px] font-bold text-white shadow-[3px_4px_6px_#000]">
            <span>1001042-AutoDeskTransfer.xml</span>
            <span className="text-center text-[#ff0000]">CheckIn - Datei schreibgeschützt</span>
            <span className="text-right">873 Parameter gefunden.</span>
          </footer>
        </main>
      </div>
    </div>
  );
}
